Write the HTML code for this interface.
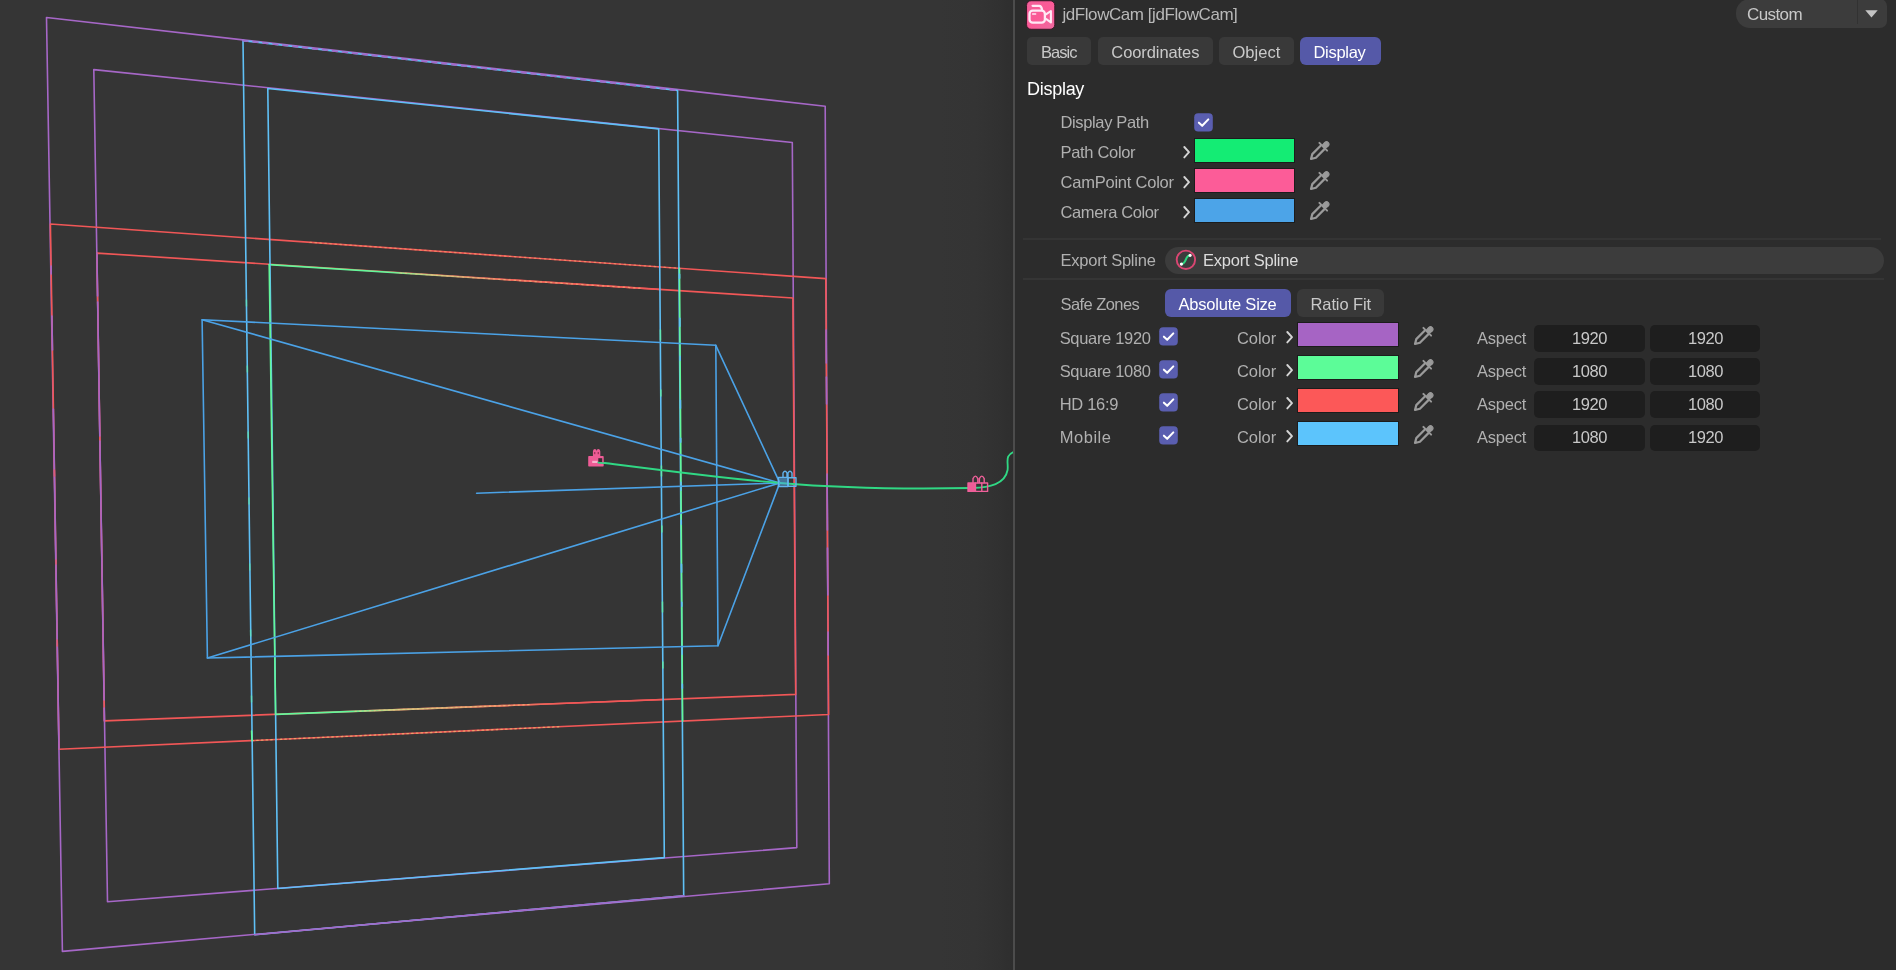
<!DOCTYPE html>
<html><head><meta charset="utf-8"><title>jdFlowCam</title>
<style>
html,body{margin:0;padding:0;}
body{width:1896px;height:970px;overflow:hidden;background:#2c2c2c;position:relative;font-family:"Liberation Sans",sans-serif;}
#vp{position:absolute;left:0;top:0;width:1013px;height:970px;background:linear-gradient(to right,#353535 0,#353535 940px,#343434 975px,#313131 998px,#2e2e2e 1013px);overflow:hidden;}
.b{position:absolute;display:block;}
.t{position:absolute;line-height:1;white-space:nowrap;}
#tx{position:absolute;left:0;top:0;width:1896px;height:970px;will-change:transform;}
</style></head><body>
<div id="vp">
<svg class="b" style="left:0;top:0" width="1016" height="970" viewBox="0 0 1016 970" fill="none" stroke-width="1.6" stroke-linecap="round" stroke-linejoin="round">
<!-- outer purple square -->
<path d="M46.5 17.5 L825.2 106.3 L829.3 883.7 L62.4 951.4 Z" stroke="#a667c7"/>
<!-- inner purple square -->
<path d="M93.8 69.6 L792.3 142.5 L796.8 847.6 L107.5 901.8 Z" stroke="#a667c7"/>
<!-- outer red (HD) -->
<path d="M50.4 224 L825.8 278.6 L828.6 714.5 L59 749.3 Z" stroke="#f15757"/>
<!-- left/right edge purple/red z-fight -->
<path d="M51.1 266 L51.2 274 M51.9 316 L52.5 350 M53.4 409 L59.0 749.3" stroke="#a667c7"/>
<path d="M54.4 470 L54.5 476 M55.9 560 L56.0 564 M57.2 640 L57.3 646" stroke="#f15757" stroke-opacity="0.7"/>
<path d="M826.1 330 L826.3 363 M826.4 377 L826.6 404 M827.1 474 L827.4 530 M827.5 548 L827.8 595 M828.1 632 L828.2 655" stroke="#a667c7"/>
<!-- inner red (HD) -->
<path d="M96.9 253.1 L792.9 298 L795.7 694.4 L104.4 720.9 Z" stroke="#f15757"/>
<path d="M96.9 253.1 L97.6 296 M97.7 302 L99.8 436 M99.9 441 L104.1 700 M104.2 708 L104.4 720.9" stroke="#a667c7"/>
<!-- outer green square (z-fights with red top/bottom) -->
<path d="M310 242.3 L679.5 268.3" stroke="#f0b070" stroke-dasharray="1.4 3.6" stroke-width="1.3" stroke-opacity="0.55"/>
<path d="M252 740.6 L560 726.7" stroke="#e8c070" stroke-dasharray="1.5 3.2" stroke-width="1.3" stroke-opacity="0.7"/>
<!-- inner green square top/bottom -->
<defs>
<linearGradient id="gt" gradientUnits="userSpaceOnUse" x1="269" y1="0" x2="660" y2="0"><stop offset="0" stop-color="#62f79a"/><stop offset="0.3" stop-color="#62f79a"/><stop offset="0.42" stop-color="#c4cc80"/><stop offset="0.62" stop-color="#ee6a5c"/><stop offset="1" stop-color="#f15757"/></linearGradient>
<linearGradient id="gb" gradientUnits="userSpaceOnUse" x1="275" y1="0" x2="663" y2="0"><stop offset="0" stop-color="#62f79a"/><stop offset="0.2" stop-color="#62f79a"/><stop offset="0.3" stop-color="#c4cc80"/><stop offset="0.62" stop-color="#ec7a60"/><stop offset="0.75" stop-color="#f15757"/><stop offset="1" stop-color="#f15757"/></linearGradient>
</defs>
<path d="M269.2 264.6 L660.3 289.5" stroke="url(#gt)"/>
<path d="M275.6 714.4 L663.2 699.5" stroke="url(#gb)"/>
<path d="M400 273 L640 288.2" stroke="#f4d080" stroke-dasharray="1.4 3.8" stroke-width="1.2" stroke-opacity="0.5"/>
<path d="M355 711.3 L530 704.6" stroke="#f4d080" stroke-dasharray="1.4 3.4" stroke-width="1.2" stroke-opacity="0.55"/>
<!-- outer blue (mobile) -->
<path d="M243 40.6 L677.6 90.5 L683.7 895.7 L254.7 934.7 Z" stroke="#5fc0f6"/>
<path d="M254.7 934.7 L683.7 895.7" stroke="#a667c7"/>
<!-- top edge purple mix -->
<path d="M243 40.6 L677.6 90.5" stroke="#a667c7" stroke-dasharray="5 5"/>
<!-- inner blue (mobile) -->
<path d="M267.8 88.5 L658.7 128.9 L664.3 857.6 L277.8 888.5 Z" stroke="#5fc0f6"/>
<!-- green verticals -->
<path d="M269.2 264.6 L275.6 714.4" stroke="#62f79a"/>
<path d="M679.5 268.3 L682.6 721.1" stroke="#62f79a"/>
<path d="M679.5 268.3 L682.6 721.1" stroke="#5fc0f6" stroke-dasharray="8 30 4 40" stroke-dashoffset="-50"/>
<path d="M660.4 330 L663.2 699.5" stroke="#62f79a" stroke-dasharray="10 50 6 70" stroke-opacity="0.7"/>
<path d="M246.4 300 L251.8 720" stroke="#62f79a" stroke-dasharray="6 60" stroke-opacity="0.5"/>
<path d="M251.6 731 L252 740.6" stroke="#62f79a"/>
<!-- camera frustum -->
<g stroke="#4ba2e6" stroke-width="1.6">
<path d="M202.1 319.7 L715.8 345.3 L718 645.7 L207.4 658 Z"/>
<path d="M779.8 482.9 L202.1 319.7 M779.8 482.9 L207.4 658 M779.8 482.9 L715.8 345.3 M779.8 482.9 L718 645.7 M779.8 482.9 L476.6 493.2"/>
</g>
<!-- path spline -->
<path d="M601 462.5 C660 470 720 478 780 483 C850 489 920 489 972 488 C990 487.5 1005 484 1007.6 470 C1008.6 462 1004 455 1015 451.5" stroke="#30d884" stroke-width="1.85"/>
<!-- cam point 1 -->
<g stroke="none">
<path d="M592.9 456.4 V451.4 Q592.9 448.9 594.8 448.9 Q596.5 448.9 596.6 451 Q596.7 448.9 598.4 448.9 Q600.3 448.9 600.3 451.4 V456.4 Z" fill="#ee5c96"/>
<rect x="588.2" y="456" width="15.5" height="10.5" rx="0.8" fill="#ee5c96"/>
<rect x="598.3" y="458.2" width="3.9" height="4" fill="#3a2c32"/>
<rect x="592.2" y="460.8" width="5.4" height="2.2" fill="#f6b4cd"/>
<rect x="594.2" y="452" width="1.1" height="2.2" fill="#8a2c52"/>
<rect x="597.7" y="452" width="1.1" height="2.2" fill="#8a2c52"/>
<path d="M598.3 462.6 L603.7 463.2" stroke="#30d884" stroke-width="1.6"/>
</g>
<!-- cam at apex (blue) -->
<g stroke="#62b4ee" stroke-width="1.4">
<rect x="778.4" y="477.4" width="9.6" height="9.2" fill="#52a8ea" fill-opacity="0.55"/>
<rect x="788" y="477.8" width="8" height="8.4" fill="none"/>
<path d="M783 477.2 V473 Q785 469.4 787 473 V477.2 M788 477.2 V473 Q790 469.4 792 473 V477.2"/>
</g>
<!-- cam point 2 -->
<g stroke="#f0609a" stroke-width="1.4">
<rect x="968" y="483" width="7.4" height="8.4" fill="#ee5c96"/>
<rect x="975.4" y="483" width="12.2" height="8.4" fill="none"/>
<path d="M981.8 483 V491.4"/>
<path d="M973 482.6 V478.6 Q975.4 473.6 977.8 478.6 V482.6 M979.4 482.6 V478.6 Q981.8 473.6 984.2 478.6 V482.6"/>
</g>
</svg>

</div>
<div class="b" style="left:1013px;top:0px;width:2px;height:970px;background:#4c4c4c;border-radius:0px;"></div>
<div class="b" style="left:1736px;top:-0.6px;width:150.8px;height:28.6px;background:#3c3c3c;border-radius:0px;border-radius:14px 7px 7px 14px;"></div>
<div class="b" style="left:1856.8px;top:0px;width:1px;height:24px;background:#323232;border-radius:0px;"></div>
<div class="b" style="left:1027px;top:37.2px;width:64px;height:28px;background:#393939;border-radius:5px;"></div>
<div class="b" style="left:1098px;top:37.2px;width:115px;height:28px;background:#393939;border-radius:5px;"></div>
<div class="b" style="left:1219px;top:37.2px;width:75px;height:28px;background:#393939;border-radius:5px;"></div>
<div class="b" style="left:1300px;top:37.2px;width:81px;height:28px;background:#5559a8;border-radius:6px;"></div>
<div class="b" style="left:1023px;top:237.8px;width:858px;height:2px;background:#343434;border-radius:0px;"></div>
<div class="b" style="left:1023px;top:278.2px;width:861px;height:1.8px;background:#353535;border-radius:0px;"></div>
<div class="b" style="left:1164.5px;top:246.9px;width:719px;height:27.1px;background:#3c3c3c;border-radius:13.5px;"></div>
<div class="b" style="left:1165px;top:289px;width:126px;height:28.3px;background:#5559a8;border-radius:6px;"></div>
<div class="b" style="left:1297px;top:289px;width:87px;height:28.3px;background:#393939;border-radius:6px;"></div>
<div class="b" style="left:1195px;top:139px;width:98.6px;height:23.3px;background:#14ec74;border-radius:0px;box-shadow:0 0 0 1px #1c1c1c;"></div>
<div class="b" style="left:1195px;top:169px;width:98.6px;height:23.3px;background:#fc5c98;border-radius:0px;box-shadow:0 0 0 1px #1c1c1c;"></div>
<div class="b" style="left:1195px;top:199px;width:98.6px;height:23.3px;background:#4ca4e8;border-radius:0px;box-shadow:0 0 0 1px #1c1c1c;"></div>
<div class="b" style="left:1297.8px;top:322.8px;width:100.4px;height:23.2px;background:#a664c4;border-radius:0px;box-shadow:0 0 0 1px #1c1c1c;"></div>
<div class="b" style="left:1534px;top:325.2px;width:110.7px;height:26.4px;background:#1e1e1e;border-radius:5px;"></div>
<div class="b" style="left:1649.7px;top:325.2px;width:110.7px;height:26.4px;background:#1e1e1e;border-radius:5px;"></div>
<div class="b" style="left:1297.8px;top:355.90000000000003px;width:100.4px;height:23.2px;background:#5cfc98;border-radius:0px;box-shadow:0 0 0 1px #1c1c1c;"></div>
<div class="b" style="left:1534px;top:358.3px;width:110.7px;height:26.4px;background:#1e1e1e;border-radius:5px;"></div>
<div class="b" style="left:1649.7px;top:358.3px;width:110.7px;height:26.4px;background:#1e1e1e;border-radius:5px;"></div>
<div class="b" style="left:1297.8px;top:389.0px;width:100.4px;height:23.2px;background:#fc5858;border-radius:0px;box-shadow:0 0 0 1px #1c1c1c;"></div>
<div class="b" style="left:1534px;top:391.4px;width:110.7px;height:26.4px;background:#1e1e1e;border-radius:5px;"></div>
<div class="b" style="left:1649.7px;top:391.4px;width:110.7px;height:26.4px;background:#1e1e1e;border-radius:5px;"></div>
<div class="b" style="left:1297.8px;top:422.1px;width:100.4px;height:23.2px;background:#5cc4fc;border-radius:0px;box-shadow:0 0 0 1px #1c1c1c;"></div>
<div class="b" style="left:1534px;top:424.5px;width:110.7px;height:26.4px;background:#1e1e1e;border-radius:5px;"></div>
<div class="b" style="left:1649.7px;top:424.5px;width:110.7px;height:26.4px;background:#1e1e1e;border-radius:5px;"></div>
<svg class="b" style="left:1193.9px;top:113.3px" width="19" height="19" viewBox="0 0 19 19"><rect x="0.2" y="0.2" width="18.6" height="18.4" rx="4" fill="#5a5eb0"/><path d="M4.9 9.7 L8.2 12.8 L14.3 6.4" fill="none" stroke="#fff" stroke-width="2.05" stroke-linecap="round" stroke-linejoin="round"/></svg>
<svg class="b" style="left:1158.5px;top:327.2px" width="19" height="19" viewBox="0 0 19 19"><rect x="0.2" y="0.2" width="18.6" height="18.4" rx="4" fill="#5a5eb0"/><path d="M4.9 9.7 L8.2 12.8 L14.3 6.4" fill="none" stroke="#fff" stroke-width="2.05" stroke-linecap="round" stroke-linejoin="round"/></svg>
<svg class="b" style="left:1158.5px;top:360.27px" width="19" height="19" viewBox="0 0 19 19"><rect x="0.2" y="0.2" width="18.6" height="18.4" rx="4" fill="#5a5eb0"/><path d="M4.9 9.7 L8.2 12.8 L14.3 6.4" fill="none" stroke="#fff" stroke-width="2.05" stroke-linecap="round" stroke-linejoin="round"/></svg>
<svg class="b" style="left:1158.5px;top:393.34px" width="19" height="19" viewBox="0 0 19 19"><rect x="0.2" y="0.2" width="18.6" height="18.4" rx="4" fill="#5a5eb0"/><path d="M4.9 9.7 L8.2 12.8 L14.3 6.4" fill="none" stroke="#fff" stroke-width="2.05" stroke-linecap="round" stroke-linejoin="round"/></svg>
<svg class="b" style="left:1158.5px;top:426.40999999999997px" width="19" height="19" viewBox="0 0 19 19"><rect x="0.2" y="0.2" width="18.6" height="18.4" rx="4" fill="#5a5eb0"/><path d="M4.9 9.7 L8.2 12.8 L14.3 6.4" fill="none" stroke="#fff" stroke-width="2.05" stroke-linecap="round" stroke-linejoin="round"/></svg>
<svg class="b" style="left:1181.8px;top:145px" width="9" height="14" viewBox="0 0 9 14"><path d="M2.3 2.0 L7.0 7.2 L2.3 12.4" fill="none" stroke="#d4d4d4" stroke-width="1.9" stroke-linecap="round" stroke-linejoin="round"/></svg>
<svg class="b" style="left:1181.8px;top:175px" width="9" height="14" viewBox="0 0 9 14"><path d="M2.3 2.0 L7.0 7.2 L2.3 12.4" fill="none" stroke="#d4d4d4" stroke-width="1.9" stroke-linecap="round" stroke-linejoin="round"/></svg>
<svg class="b" style="left:1181.8px;top:205px" width="9" height="14" viewBox="0 0 9 14"><path d="M2.3 2.0 L7.0 7.2 L2.3 12.4" fill="none" stroke="#d4d4d4" stroke-width="1.9" stroke-linecap="round" stroke-linejoin="round"/></svg>
<svg class="b" style="left:1284.8px;top:329.8px" width="9" height="14" viewBox="0 0 9 14"><path d="M2.3 2.0 L7.0 7.2 L2.3 12.4" fill="none" stroke="#d4d4d4" stroke-width="1.9" stroke-linecap="round" stroke-linejoin="round"/></svg>
<svg class="b" style="left:1284.8px;top:362.90000000000003px" width="9" height="14" viewBox="0 0 9 14"><path d="M2.3 2.0 L7.0 7.2 L2.3 12.4" fill="none" stroke="#d4d4d4" stroke-width="1.9" stroke-linecap="round" stroke-linejoin="round"/></svg>
<svg class="b" style="left:1284.8px;top:396.0px" width="9" height="14" viewBox="0 0 9 14"><path d="M2.3 2.0 L7.0 7.2 L2.3 12.4" fill="none" stroke="#d4d4d4" stroke-width="1.9" stroke-linecap="round" stroke-linejoin="round"/></svg>
<svg class="b" style="left:1284.8px;top:429.1px" width="9" height="14" viewBox="0 0 9 14"><path d="M2.3 2.0 L7.0 7.2 L2.3 12.4" fill="none" stroke="#d4d4d4" stroke-width="1.9" stroke-linecap="round" stroke-linejoin="round"/></svg>
<svg class="b" style="left:1309px;top:140px" width="21" height="21" viewBox="0 0 21 21"><g fill="none" stroke="#9a9a9a" stroke-width="2.2" stroke-linejoin="round" stroke-linecap="round"><path d="M11.6 5.8 L3.3 14.1 L2.0 19.0 L6.9 17.7 L15.2 9.4"/><path d="M10.4 2.9 L18.1 10.6" stroke-width="2"/></g><path d="M13.0 5.6 L15.6 2.6 Q17.6 0.9 19.3 2.6 Q20.9 4.4 19.0 6.2 L15.8 8.6 Z" fill="#9a9a9a" stroke="#9a9a9a" stroke-width="1.2" stroke-linejoin="round"/></svg>
<svg class="b" style="left:1309px;top:170px" width="21" height="21" viewBox="0 0 21 21"><g fill="none" stroke="#9a9a9a" stroke-width="2.2" stroke-linejoin="round" stroke-linecap="round"><path d="M11.6 5.8 L3.3 14.1 L2.0 19.0 L6.9 17.7 L15.2 9.4"/><path d="M10.4 2.9 L18.1 10.6" stroke-width="2"/></g><path d="M13.0 5.6 L15.6 2.6 Q17.6 0.9 19.3 2.6 Q20.9 4.4 19.0 6.2 L15.8 8.6 Z" fill="#9a9a9a" stroke="#9a9a9a" stroke-width="1.2" stroke-linejoin="round"/></svg>
<svg class="b" style="left:1309px;top:200px" width="21" height="21" viewBox="0 0 21 21"><g fill="none" stroke="#9a9a9a" stroke-width="2.2" stroke-linejoin="round" stroke-linecap="round"><path d="M11.6 5.8 L3.3 14.1 L2.0 19.0 L6.9 17.7 L15.2 9.4"/><path d="M10.4 2.9 L18.1 10.6" stroke-width="2"/></g><path d="M13.0 5.6 L15.6 2.6 Q17.6 0.9 19.3 2.6 Q20.9 4.4 19.0 6.2 L15.8 8.6 Z" fill="#9a9a9a" stroke="#9a9a9a" stroke-width="1.2" stroke-linejoin="round"/></svg>
<svg class="b" style="left:1413px;top:324.6px" width="21" height="21" viewBox="0 0 21 21"><g fill="none" stroke="#9a9a9a" stroke-width="2.2" stroke-linejoin="round" stroke-linecap="round"><path d="M11.6 5.8 L3.3 14.1 L2.0 19.0 L6.9 17.7 L15.2 9.4"/><path d="M10.4 2.9 L18.1 10.6" stroke-width="2"/></g><path d="M13.0 5.6 L15.6 2.6 Q17.6 0.9 19.3 2.6 Q20.9 4.4 19.0 6.2 L15.8 8.6 Z" fill="#9a9a9a" stroke="#9a9a9a" stroke-width="1.2" stroke-linejoin="round"/></svg>
<svg class="b" style="left:1413px;top:357.70000000000005px" width="21" height="21" viewBox="0 0 21 21"><g fill="none" stroke="#9a9a9a" stroke-width="2.2" stroke-linejoin="round" stroke-linecap="round"><path d="M11.6 5.8 L3.3 14.1 L2.0 19.0 L6.9 17.7 L15.2 9.4"/><path d="M10.4 2.9 L18.1 10.6" stroke-width="2"/></g><path d="M13.0 5.6 L15.6 2.6 Q17.6 0.9 19.3 2.6 Q20.9 4.4 19.0 6.2 L15.8 8.6 Z" fill="#9a9a9a" stroke="#9a9a9a" stroke-width="1.2" stroke-linejoin="round"/></svg>
<svg class="b" style="left:1413px;top:390.8px" width="21" height="21" viewBox="0 0 21 21"><g fill="none" stroke="#9a9a9a" stroke-width="2.2" stroke-linejoin="round" stroke-linecap="round"><path d="M11.6 5.8 L3.3 14.1 L2.0 19.0 L6.9 17.7 L15.2 9.4"/><path d="M10.4 2.9 L18.1 10.6" stroke-width="2"/></g><path d="M13.0 5.6 L15.6 2.6 Q17.6 0.9 19.3 2.6 Q20.9 4.4 19.0 6.2 L15.8 8.6 Z" fill="#9a9a9a" stroke="#9a9a9a" stroke-width="1.2" stroke-linejoin="round"/></svg>
<svg class="b" style="left:1413px;top:423.90000000000003px" width="21" height="21" viewBox="0 0 21 21"><g fill="none" stroke="#9a9a9a" stroke-width="2.2" stroke-linejoin="round" stroke-linecap="round"><path d="M11.6 5.8 L3.3 14.1 L2.0 19.0 L6.9 17.7 L15.2 9.4"/><path d="M10.4 2.9 L18.1 10.6" stroke-width="2"/></g><path d="M13.0 5.6 L15.6 2.6 Q17.6 0.9 19.3 2.6 Q20.9 4.4 19.0 6.2 L15.8 8.6 Z" fill="#9a9a9a" stroke="#9a9a9a" stroke-width="1.2" stroke-linejoin="round"/></svg>
<svg class="b" style="left:1865px;top:10px" width="13" height="8" viewBox="0 0 13 8"><path d="M0.3 0.3 L12.7 0.3 L6.5 7.6 Z" fill="#c4c4c4"/></svg>
<svg class="b" style="left:1026px;top:0px" width="30" height="30" viewBox="0 0 30 30">
<defs><linearGradient id="pg" x1="0" y1="0" x2="1" y2="1"><stop offset="0" stop-color="#f2609a"/><stop offset="0.5" stop-color="#fb5a96"/><stop offset="1" stop-color="#ee6aa0"/></linearGradient></defs>
<rect x="0.55" y="0.75" width="28.2" height="28.5" rx="4.6" fill="url(#pg)" stroke="#341222" stroke-width="0.9"/>
<g fill="none" stroke="#ffe9f5" stroke-width="2.3" stroke-linejoin="round" stroke-linecap="round">
<rect x="3.5" y="10.7" width="15.4" height="12" rx="3.2"/>
<path d="M6.6 5.8 H13.2 Q15.5 5.8 16 9.6"/>
<path d="M20.3 14.2 L24.9 11 V22.4 L20.3 19.2" stroke-width="2.1"/>
<path d="M6.6 13.9 H9.6" stroke-width="1.5"/>
</g></svg>
<svg class="b" style="left:1175px;top:249px" width="22" height="22" viewBox="0 0 22 22">
<circle cx="10.9" cy="10.85" r="9.2" fill="none" stroke="#d94672" stroke-width="1.9"/>
<path d="M6.4 15.1 C11.6 15.1 10 6.3 15.1 6.3" fill="none" stroke="#2ed47e" stroke-width="2.1" stroke-linecap="round"/>
<circle cx="6.4" cy="15.1" r="1.6" fill="#fff"/><circle cx="15.1" cy="6.3" r="1.6" fill="#fff"/></svg>
<div id="tx">
<span class="t" style="left:1062.50px;top:5.81px;font-size:17px;color:#b8b8b8;letter-spacing:-0.443px">jdFlowCam [jdFlowCam]</span>
<span class="t" style="left:1747.00px;top:5.81px;font-size:17px;color:#c8c8c8;letter-spacing:-0.596px">Custom</span>
<span class="t" style="left:1041.10px;top:44.03px;font-size:16.5px;color:#c9c9c9;letter-spacing:-0.992px">Basic</span>
<span class="t" style="left:1111.30px;top:44.03px;font-size:16.5px;color:#c9c9c9;letter-spacing:-0.080px">Coordinates</span>
<span class="t" style="left:1232.50px;top:44.03px;font-size:16.5px;color:#c9c9c9;letter-spacing:0.035px">Object</span>
<span class="t" style="left:1313.50px;top:44.03px;font-size:16.5px;color:#ffffff;letter-spacing:-0.301px">Display</span>
<span class="t" style="left:1027.00px;top:79.76px;font-size:18px;color:#ffffff;letter-spacing:-0.276px">Display</span>
<span class="t" style="left:1060.50px;top:113.83px;font-size:16.5px;color:#b0b0b0;letter-spacing:-0.362px">Display Path</span>
<span class="t" style="left:1060.50px;top:143.73px;font-size:16.5px;color:#b0b0b0;letter-spacing:-0.317px">Path Color</span>
<span class="t" style="left:1060.50px;top:173.73px;font-size:16.5px;color:#b0b0b0;letter-spacing:-0.226px">CamPoint Color</span>
<span class="t" style="left:1060.50px;top:203.63px;font-size:16.5px;color:#b0b0b0;letter-spacing:-0.375px">Camera Color</span>
<span class="t" style="left:1060.50px;top:251.83px;font-size:16.5px;color:#b0b0b0;letter-spacing:-0.234px">Export Spline</span>
<span class="t" style="left:1203.00px;top:251.83px;font-size:16.5px;color:#dcdcdc;letter-spacing:-0.226px">Export Spline</span>
<span class="t" style="left:1060.50px;top:296.13px;font-size:16.5px;color:#b0b0b0;letter-spacing:-0.569px">Safe Zones</span>
<span class="t" style="left:1178.50px;top:295.63px;font-size:16.5px;color:#ffffff;letter-spacing:-0.216px">Absolute Size</span>
<span class="t" style="left:1310.50px;top:295.63px;font-size:16.5px;color:#c9c9c9;letter-spacing:-0.104px">Ratio Fit</span>
<span class="t" style="left:1059.70px;top:329.63px;font-size:16.5px;color:#b0b0b0;letter-spacing:-0.327px">Square 1920</span>
<span class="t" style="left:1237.00px;top:329.63px;font-size:16.5px;color:#b0b0b0;letter-spacing:-0.067px">Color</span>
<span class="t" style="left:1477.00px;top:329.63px;font-size:16.5px;color:#b0b0b0;letter-spacing:-0.226px">Aspect</span>
<span class="t" style="left:1572.00px;top:330.03px;font-size:16.5px;color:#c8c8c8;letter-spacing:-0.405px">1920</span>
<span class="t" style="left:1688.00px;top:330.03px;font-size:16.5px;color:#c8c8c8;letter-spacing:-0.405px">1920</span>
<span class="t" style="left:1059.70px;top:362.73px;font-size:16.5px;color:#b0b0b0;letter-spacing:-0.327px">Square 1080</span>
<span class="t" style="left:1237.00px;top:362.73px;font-size:16.5px;color:#b0b0b0;letter-spacing:-0.067px">Color</span>
<span class="t" style="left:1477.00px;top:362.73px;font-size:16.5px;color:#b0b0b0;letter-spacing:-0.226px">Aspect</span>
<span class="t" style="left:1572.00px;top:363.13px;font-size:16.5px;color:#c8c8c8;letter-spacing:-0.405px">1080</span>
<span class="t" style="left:1688.00px;top:363.13px;font-size:16.5px;color:#c8c8c8;letter-spacing:-0.405px">1080</span>
<span class="t" style="left:1059.70px;top:395.83px;font-size:16.5px;color:#b0b0b0;letter-spacing:-0.304px">HD 16:9</span>
<span class="t" style="left:1237.00px;top:395.83px;font-size:16.5px;color:#b0b0b0;letter-spacing:-0.067px">Color</span>
<span class="t" style="left:1477.00px;top:395.83px;font-size:16.5px;color:#b0b0b0;letter-spacing:-0.226px">Aspect</span>
<span class="t" style="left:1572.00px;top:396.23px;font-size:16.5px;color:#c8c8c8;letter-spacing:-0.405px">1920</span>
<span class="t" style="left:1688.00px;top:396.23px;font-size:16.5px;color:#c8c8c8;letter-spacing:-0.405px">1080</span>
<span class="t" style="left:1059.70px;top:428.93px;font-size:16.5px;color:#b0b0b0;letter-spacing:0.532px">Mobile</span>
<span class="t" style="left:1237.00px;top:428.93px;font-size:16.5px;color:#b0b0b0;letter-spacing:-0.067px">Color</span>
<span class="t" style="left:1477.00px;top:428.93px;font-size:16.5px;color:#b0b0b0;letter-spacing:-0.226px">Aspect</span>
<span class="t" style="left:1572.00px;top:429.33px;font-size:16.5px;color:#c8c8c8;letter-spacing:-0.405px">1080</span>
<span class="t" style="left:1688.00px;top:429.33px;font-size:16.5px;color:#c8c8c8;letter-spacing:-0.405px">1920</span>
</div>
</body></html>
